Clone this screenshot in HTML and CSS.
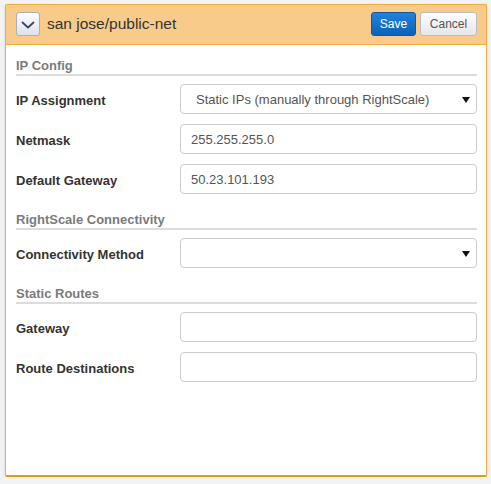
FILE: index.html
```html
<!DOCTYPE html>
<html>
<head>
<meta charset="utf-8">
<link rel="stylesheet" href="styles.css">
</head>
<body>
<div class="panel">
  <div class="panel-head">
    <button class="toggle" type="button" aria-label="Collapse">
      <svg width="14" height="8" viewBox="0 0 14 8"><path d="M1.5 1.5 L7 6.5 L12.5 1.5" fill="none" stroke="#3b4660" stroke-width="1.8" stroke-linecap="round" stroke-linejoin="round"/></svg>
    </button>
    <span class="title">san jose/public-net</span>
    <div class="actions">
      <button class="btn btn-primary" type="button">Save</button>
      <button class="btn btn-default" type="button">Cancel</button>
    </div>
  </div>
  <div class="panel-body">
    <div class="section">IP Config</div>
    <div class="row">
      <label class="label">IP Assignment</label>
      <div class="field select"><span class="sel-text">Static IPs (manually through RightScale)</span><span class="caret"></span></div>
    </div>
    <div class="row">
      <label class="label">Netmask</label>
      <div class="field">255.255.255.0</div>
    </div>
    <div class="row">
      <label class="label">Default Gateway</label>
      <div class="field">50.23.101.193</div>
    </div>

    <div class="section">RightScale Connectivity</div>
    <div class="row">
      <label class="label">Connectivity Method</label>
      <div class="field select"><span class="sel-text"></span><span class="caret"></span></div>
    </div>

    <div class="section">Static Routes</div>
    <div class="row">
      <label class="label">Gateway</label>
      <div class="field"></div>
    </div>
    <div class="row">
      <label class="label">Route Destinations</label>
      <div class="field"></div>
    </div>
  </div>
</div>
</body>
</html>
```
FILE: styles.css
```css
* { box-sizing: border-box; }
html, body { margin: 0; padding: 0; }
body {
  background: #f2f3f5;
  font-family: "Liberation Sans", Arial, sans-serif;
  color: #333;
  padding: 4px 0 0 5px;
}
.panel {
  width: 482px;
  height: 473px;
  background: #fff;
  border: 1px solid #efae3c;
  border-bottom: 2px solid #e09c12;
  border-radius: 2px;
  box-shadow: 0 1px 3px rgba(0,0,0,0.12);
}
.panel-head {
  height: 40px;
  background: #f9cb8b;
  border-bottom: 1px solid #efae3c;
  display: flex;
  align-items: center;
  padding: 0 9px 1px 10px;
}
.toggle {
  width: 24px;
  height: 24px;
  padding: 0;
  margin: 0;
  border: 1px solid #a9b0bb;
  border-radius: 3px;
  background: linear-gradient(#fdfdfe, #dde2ea);
  display: flex;
  align-items: center;
  justify-content: center;
  box-shadow: inset 0 1px 0 #fff;
}
.toggle svg { display: block; margin-top: 1px; }
.title {
  margin-left: 7px;
  font-size: 15.5px;
  color: #333;
}
.actions {
  margin-left: auto;
  display: flex;
  gap: 4px;
}
.btn {
  height: 24px;
  font-family: "Liberation Sans", Arial, sans-serif;
  font-size: 12px;
  border-radius: 3px;
  padding: 0;
  margin: 0;
}
.btn-primary {
  width: 45px;
  color: #fff;
  background: linear-gradient(#2083dd, #0a61b9);
  border: 1px solid #0b58a6;
}
.btn-default {
  width: 57px;
  color: #555;
  background: linear-gradient(#fdfdfd, #e4e6e9);
  border: 1px solid #b9bcc1;
}
.panel-body {
  padding: 0 9px 0 10px;
}
.section {
  margin-top: 18px;
  font-size: 13px;
  line-height: 15px;
  font-weight: bold;
  color: #7b7b7b;
  padding-bottom: 1px;
  border-bottom: 2px solid #dcdcdc;
}
.section:first-child { margin-top: 13px; }
.section + .row { margin-top: 8px; }
.row {
  display: flex;
  align-items: center;
  margin-top: 10px;
}
.label {
  width: 164px;
  flex: none;
  font-size: 13px;
  font-weight: bold;
  color: #333;
  padding-top: 3px;
}
.field {
  flex: 1;
  height: 30px;
  border: 1px solid #cbcbcb;
  border-radius: 4px;
  font-size: 13px;
  color: #555;
  padding: 0 10px;
  display: flex;
  align-items: center;
  background: #fff;
}
.select {
  padding: 0 6px 0 15px;
}
.sel-text { flex: 1; }
.caret {
  width: 0;
  height: 0;
  border-left: 4px solid transparent;
  border-right: 4px solid transparent;
  border-top: 6px solid #111;
  margin-top: 1px;
}
```
